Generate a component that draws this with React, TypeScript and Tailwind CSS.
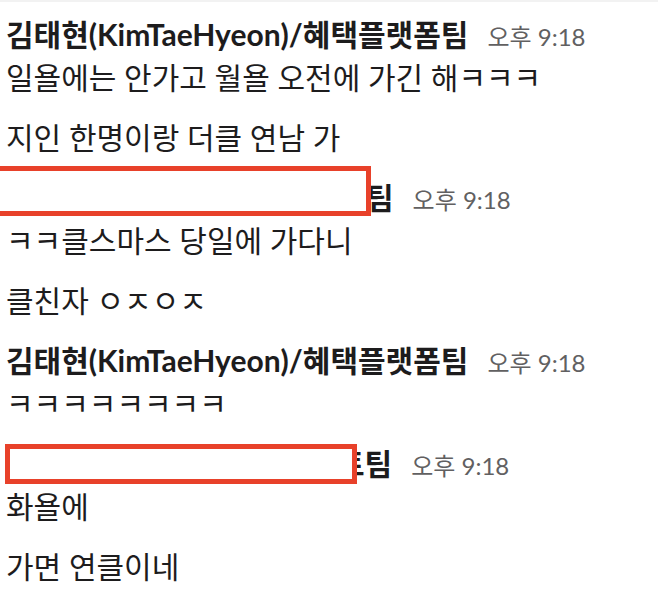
import React from 'react';

const font = { fontFamily: 'Lato, "Noto Sans CJK KR", sans-serif' };

type Group = { name?: string; hidden?: 'one' | 'two'; lines: string[] };

const groups: Group[] = [
  { name: '김태현(KimTaeHyeon)/혜택플랫폼팀', lines: ['일욜에는 안가고 월욜 오전에 가긴 해ㅋㅋㅋ', '지인 한명이랑 더클 연남 가'] },
  { hidden: 'one', lines: ['ㅋㅋ클스마스 당일에 가다니', '클친자 ㅇㅈㅇㅈ'] },
  { name: '김태현(KimTaeHyeon)/혜택플랫폼팀', lines: ['ㅋㅋㅋㅋㅋㅋㅋㅋ'] },
  { hidden: 'two', lines: ['화욜에', '가면 연클이네'] },
];

function Time() {
  return <span className="ml-[19px] text-[24px] text-[#616061]">오후 9:18</span>;
}

function NameRow({ g }: { g: Group }) {
  if (g.name) {
    return (
      <div className="flex items-baseline h-[40px] leading-[40px] mb-[3px]">
        <span className="text-[30px] font-bold text-[#1d1c1d]">{g.name}</span>
        <Time />
      </div>
    );
  }
  const one = g.hidden === 'one';
  return (
    <div className="relative flex items-baseline h-[40px] leading-[40px] mb-[3px]">
      <span className={one ? 'w-[360px] shrink-0' : 'w-[331px] shrink-0'} />
      <span className="text-[30px] font-bold text-[#1d1c1d]">{one ? '팀' : '트팀'}</span>
      <Time />
      {one ? (
        <div className="absolute left-[-12px] top-[-11px] w-[377px] h-[50px] border-[5px] border-[#e8412a] bg-white" />
      ) : (
        <div className="absolute left-[-1px] top-[1px] w-[352px] h-[40px] border-[5px] border-[#e8412a] bg-white" />
      )}
    </div>
  );
}

export default function App() {
  return (
    <div className="w-[658px] h-[608px] overflow-hidden bg-white" style={font}>
      <div className="h-[2px] bg-[#f2f2f2]" />
      <div className="pt-[12px] pl-[6px]">
        {groups.map((g, i) => (
          <div key={i}>
            <NameRow g={g} />
            {g.lines.map((l, j) => (
              <div key={j} className="h-[40px] leading-[40px] mb-[20px] text-[30px] text-[#1d1c1d]">
                {l}
              </div>
            ))}
          </div>
        ))}
      </div>
    </div>
  );
}
